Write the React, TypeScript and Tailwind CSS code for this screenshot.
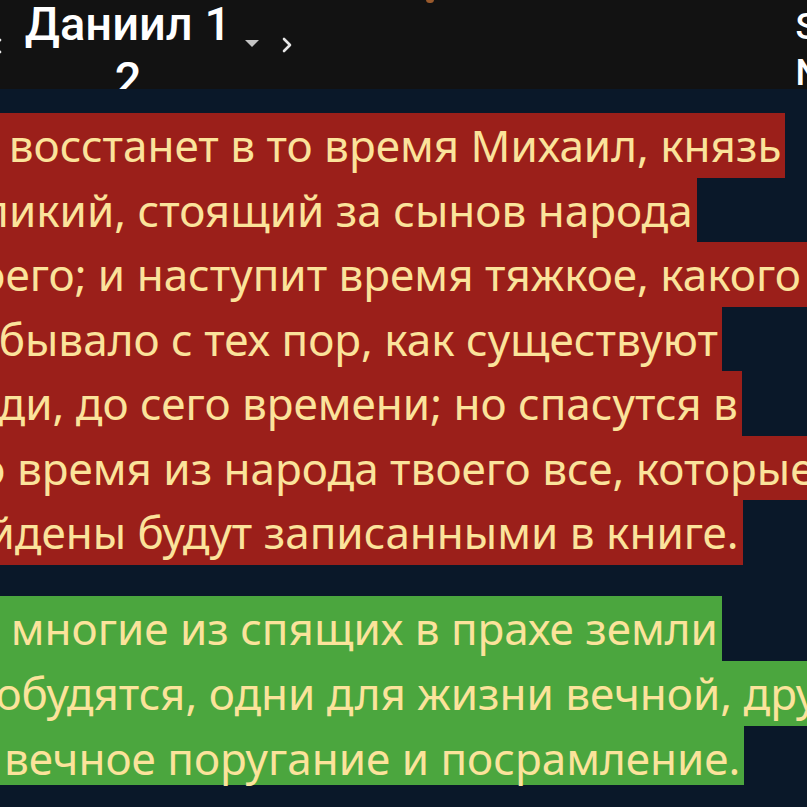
import React from "react";

const red = [
  { pre: "И ", text: "восстанет в то время Михаил, князь", ml: "-ml-[36px]" },
  { pre: "вел", text: "икий, стоящий за сынов народа", ml: "-ml-[66px]" },
  { pre: "тво", text: "его; и наступит время тяжкое, какого не", ml: "-ml-[66px]" },
  { pre: "не ", text: "бывало с тех пор, как существуют", ml: "-ml-[64px]" },
  { pre: "лю", text: "ди, до сего времени; но спасутся в", ml: "-ml-[62px]" },
  { pre: "это ", text: "время из народа твоего все, которые", ml: "-ml-[62px]" },
  { pre: "на", text: "йдены будут записанными в книге.", ml: "-ml-[64px]" },
];

const green = [
  { pre: "И ", text: "многие из спящих в прахе земли", ml: "-ml-[34px]", h: "h-[65px]" },
  { pre: "пр", text: "обудятся, одни для жизни вечной, другие", ml: "-ml-[58px]", h: "h-[65px]" },
  { pre: "на ", text: "вечное поругание и посрамление.", ml: "-ml-[59px]", h: "h-[59px]" },
];

function Line({ pre, text, ml, bg, h = "h-[64.5px]" }: { pre: string; text: string; ml: string; bg: string; h?: string }) {
  return (
    <div className={`w-fit whitespace-nowrap leading-[64.5px] pr-1 ${h} ${ml} ${bg}`}>
      {pre}
      {text}
    </div>
  );
}

function Chevron({ dir }: { dir: "left" | "right" }) {
  return (
    <svg width="12" height="16" viewBox="0 0 12 16" fill="none" stroke="#e5e5e5" strokeWidth="2.6" strokeLinecap="round" strokeLinejoin="round">
      {dir === "right" ? <path d="M3 2 L9 8 L3 14" /> : <path d="M9 2 L3 8 L9 14" />}
    </svg>
  );
}

export default function App() {
  return (
    <div className="w-[807px] h-[807px] overflow-hidden bg-[#0a1829] font-['Noto_Sans',sans-serif]">
      <header className="relative h-[89px] overflow-hidden bg-[#121212] flex items-start text-white">
        <span className="-ml-[9px] mt-[38px]">
          <Chevron dir="left" />
        </span>
        <div className="ml-[20px] w-[210px] text-center font-['Roboto',sans-serif] font-medium text-[47px] leading-[55px] -mt-[4px]">
          Даниил 1<br />2
        </div>
        <span className="ml-[12px] mt-[40px] w-0 h-0 border-l-[7px] border-r-[7px] border-t-[7px] border-l-transparent border-r-transparent border-t-[#c4c4c4]" />
        <span className="ml-[22px] mt-[37px]">
          <Chevron dir="right" />
        </span>
        <div className="ml-auto -mr-[14px] pt-[4px] font-['Roboto',sans-serif] font-medium text-[36px] leading-[46px]">
          S<br />N
        </div>
        <span className="absolute left-[426px] -top-[4px] w-[8px] h-[7px] rounded-full bg-[#9a5a2c]" />
      </header>
      <main className="pt-[24px] text-[44px] text-[#fbe39b]">
        <div>
          {red.map((l, i) => (
            <Line key={i} {...l} bg="bg-[#9b1f1a]" />
          ))}
        </div>
        <div className="mt-[31px]">
          {green.map((l, i) => (
            <Line key={i} {...l} bg="bg-[#4ba63e]" />
          ))}
        </div>
      </main>
    </div>
  );
}
